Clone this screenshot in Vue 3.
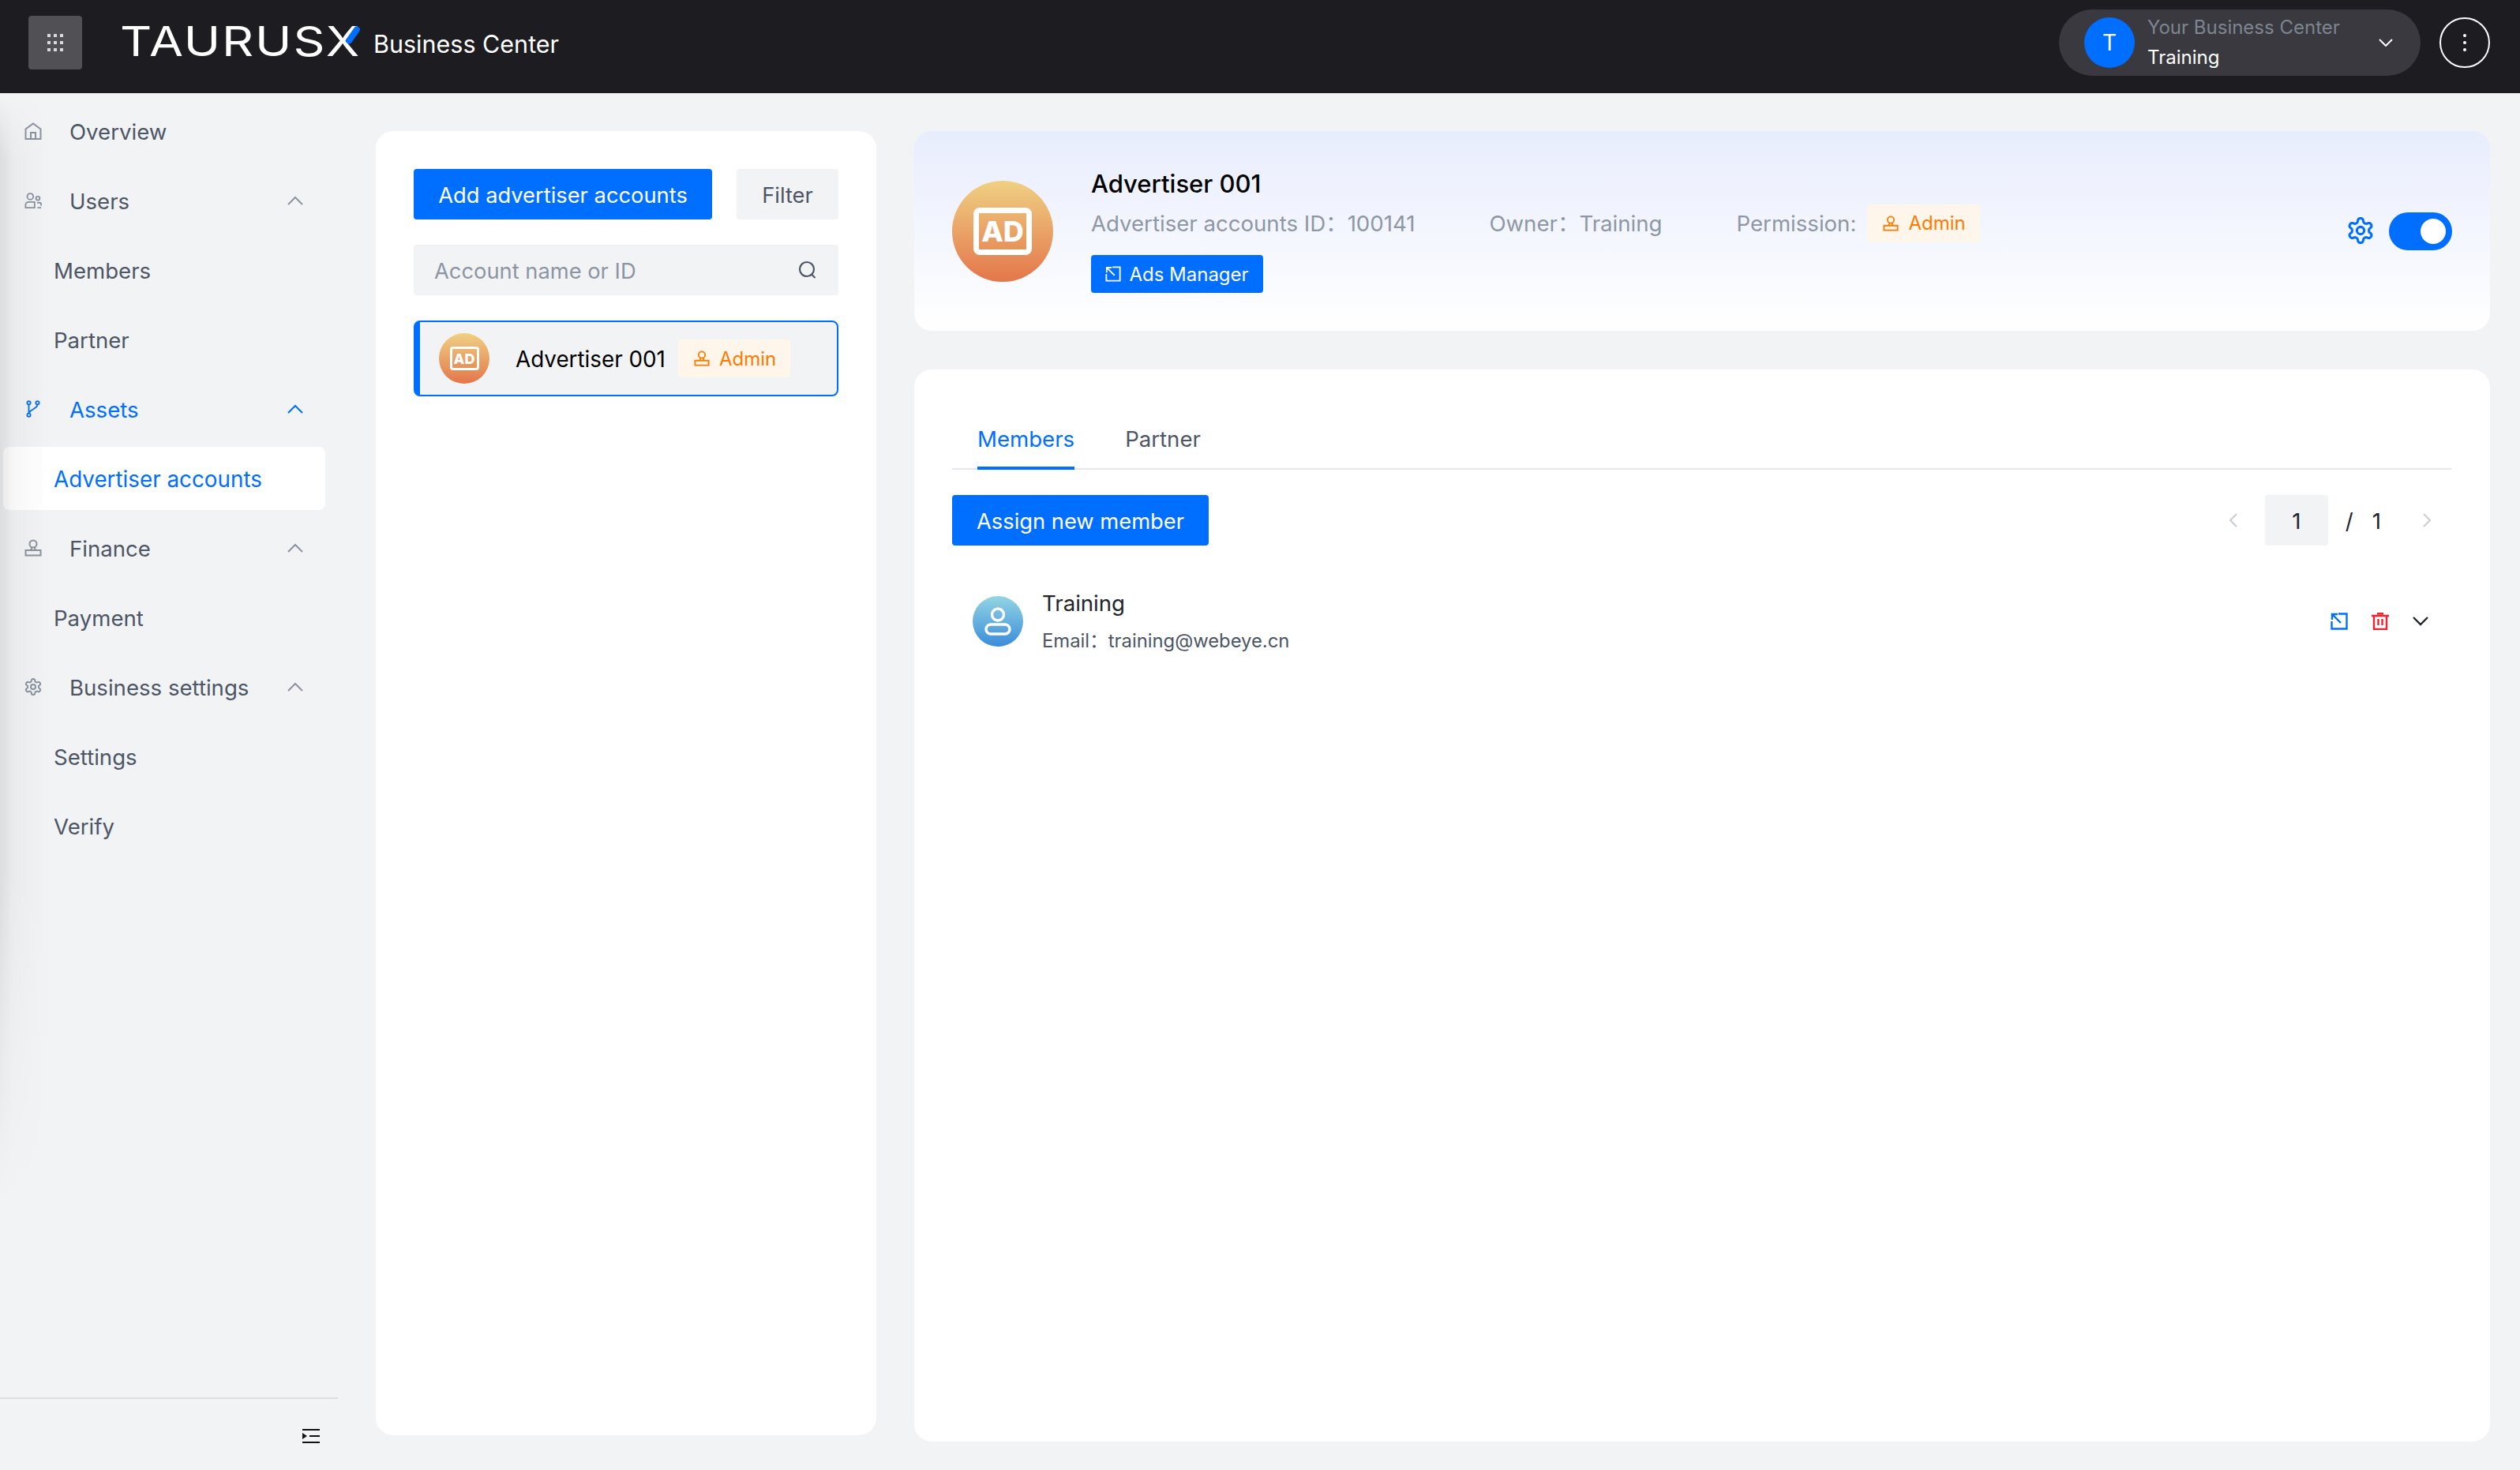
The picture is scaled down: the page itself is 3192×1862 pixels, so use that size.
<template>
  <div class="page">
    <!-- shared icon symbols -->
    <svg class="defs" aria-hidden="true">
      <symbol id="i-home" viewBox="0 0 22 22"><path d="M1.5 21V8.5L11 1.5l9.5 7V21zM8 21v-8h6v8" /></symbol>
      <symbol id="i-users" viewBox="0 0 24 22"><circle cx="8" cy="5.5" r="4.2" /><circle cx="18.5" cy="8" r="2.6" /><path d="M1.5 21v-4a4 4 0 0 1 4-4H14v8zM17.5 14h3a2.5 2.5 0 0 1 2.5 2.5V18M18 21h5" /></symbol>
      <symbol id="i-branch" viewBox="0 0 20 24"><circle cx="4" cy="3.5" r="2.3" /><circle cx="16" cy="3.5" r="2.3" /><circle cx="4" cy="20.5" r="2.3" /><path d="M4 6v12M16 6c0 5-8 6-12 11" /></symbol>
      <symbol id="i-stamp" viewBox="0 0 22 22"><circle cx="11" cy="6" r="4.5" /><path d="M9 10.2c0 1.6-.4 2.8-1 3.8M13 10.2c0 1.6.4 2.8 1 3.8M1.5 14h19v6.5h-19z" /></symbol>
      <symbol id="i-gear" viewBox="1 1 22 22"><path d="M12.22 2h-.44a2 2 0 0 0-2 2v.18a2 2 0 0 1-1 1.73l-.43.25a2 2 0 0 1-2 0l-.15-.08a2 2 0 0 0-2.73.73l-.22.38a2 2 0 0 0 .73 2.73l.15.1a2 2 0 0 1 1 1.72v.51a2 2 0 0 1-1 1.74l-.15.09a2 2 0 0 0-.73 2.73l.22.38a2 2 0 0 0 2.73.73l.15-.08a2 2 0 0 1 2 0l.43.25a2 2 0 0 1 1 1.73V20a2 2 0 0 0 2 2h.44a2 2 0 0 0 2-2v-.18a2 2 0 0 1 1-1.73l.43-.25a2 2 0 0 1 2 0l.15.08a2 2 0 0 0 2.73-.73l.22-.39a2 2 0 0 0-.73-2.73l-.15-.08a2 2 0 0 1-1-1.74v-.5a2 2 0 0 1 1-1.74l.15-.09a2 2 0 0 0 .73-2.73l-.22-.38a2 2 0 0 0-2.73-.73l-.15.08a2 2 0 0 1-2 0l-.43-.25a2 2 0 0 1-1-1.73V4a2 2 0 0 0-2-2z" /><circle cx="12" cy="12" r="3" /></symbol>
      <symbol id="i-open" viewBox="0 0 22 22"><path d="M10 1.5h10.5v19h-19V11M2.5 2.5l10.5 10.5M2 9V2h7" /></symbol>
    </svg>

    <header class="topbar">
      <button class="grid-btn">
        <svg width="20" height="22" viewBox="0 0 20 22"><g fill="#d9d9db"><rect v-for="d in gridDots" :key="d.k" :x="d.x" :y="d.y" width="4" height="4" /></g></svg>
      </button>
      <div class="logo"><span class="logo-word">TAURUSX</span><i class="logo-mark"></i></div>
      <span class="product">Business Center</span>
      <div class="spacer"></div>
      <div class="account">
        <span class="account-avatar">T</span>
        <div class="account-text">
          <div class="account-label">Your Business Center</div>
          <div class="account-name">Training</div>
        </div>
        <svg class="account-caret" width="18" height="10" viewBox="0 0 18 10"><path d="M1 1l8 8 8-8" /></svg>
      </div>
      <button class="more-btn"><i></i><i></i><i></i></button>
    </header>

    <div class="body">
      <aside class="sidebar">
        <nav class="nav">
          <div
            v-for="item in navItems"
            :key="item.label"
            class="nav-item"
            :class="{ sub: !item.icon, active: item.active, current: item.current }"
          >
            <svg v-if="item.icon" class="nav-icon"><use :href="'#i-' + item.icon" /></svg>
            <span class="nav-label">{{ item.label }}</span>
            <svg v-if="item.caret" class="nav-caret" width="20" height="12" viewBox="0 0 20 12"><path d="M1 11l9-9 9 9" /></svg>
          </div>
        </nav>
        <div class="side-foot">
          <svg width="22" height="18" viewBox="0 0 22 18"><path d="M0 1h22M9 9h13M0 17h22" stroke="#111" stroke-width="2" fill="none" /><path d="M0 5l6 4-6 4z" fill="#111" /></svg>
        </div>
      </aside>

      <section class="account-list card">
        <div class="list-actions">
          <button class="btn primary add-btn">Add advertiser accounts</button>
          <button class="btn ghost">Filter</button>
        </div>
        <div class="search">
          <span class="search-text">Account name or ID</span>
          <svg width="24" height="24" viewBox="0 0 24 24"><circle cx="11" cy="11" r="9" /><path d="M17.5 18l4 4" /></svg>
        </div>
        <div class="account-row">
          <div class="ad-avatar small"><span class="ad-box">AD</span></div>
          <span class="row-name">Advertiser 001</span>
          <span class="tag"><svg class="tag-icon"><use href="#i-stamp" /></svg>Admin</span>
        </div>
      </section>

      <main class="detail">
        <section class="summary card">
          <div class="ad-avatar big"><span class="ad-box">AD</span></div>
          <div class="summary-info">
            <h1 class="summary-title">Advertiser 001</h1>
            <div class="summary-meta">
              <span>Advertiser accounts ID：100141</span>
              <span>Owner：Training</span>
              <span class="perm">Permission:<span class="tag"><svg class="tag-icon"><use href="#i-stamp" /></svg>Admin</span></span>
            </div>
            <button class="ads-btn"><svg class="ads-icon"><use href="#i-open" /></svg>Ads Manager</button>
          </div>
          <div class="summary-tools">
            <svg class="tool-gear"><use href="#i-gear" /></svg>
            <span class="switch"><i></i></span>
          </div>
        </section>

        <section class="members card">
          <div class="tabs">
            <span class="tab active">Members</span>
            <span class="tab">Partner</span>
          </div>
          <div class="toolbar">
            <button class="btn primary assign-btn">Assign new member</button>
            <div class="pager">
              <svg class="pager-arrow" width="10" height="18" viewBox="0 0 10 18"><path d="M9 1L1 9l8 8" /></svg>
              <span class="pager-input">1</span>
              <span class="pager-slash">/</span>
              <span class="pager-total">1</span>
              <svg class="pager-arrow" width="10" height="18" viewBox="0 0 10 18"><path d="M1 1l8 8-8 8" /></svg>
            </div>
          </div>
          <div class="member">
            <div class="member-avatar">
              <svg width="34" height="36" viewBox="0 0 34 36"><circle cx="17" cy="9.5" r="7.5" /><rect x="2" y="22" width="30" height="12" rx="6" /></svg>
            </div>
            <div class="member-text">
              <div class="member-name">Training</div>
              <div class="member-mail">Email：training@webeye.cn</div>
            </div>
            <div class="member-actions">
              <svg class="act-open"><use href="#i-open" /></svg>
              <svg class="act-trash" width="22" height="22" viewBox="0 0 22 22"><path d="M0 4h22M7 1.2h8M3 4v17h16V4M8.5 8v8M13.5 8v8" /></svg>
              <svg class="act-caret" width="20" height="12" viewBox="0 0 20 12"><path d="M1 1l9 9 9-9" /></svg>
            </div>
          </div>
        </section>
      </main>
    </div>
  </div>
</template>

<script setup>
const gridDots = []
for (let r = 0; r < 3; r++) {
  for (let c = 0; c < 3; c++) {
    gridDots.push({ k: `${r}-${c}`, x: c * 8, y: r * 9 })
  }
}

const navItems = [
  { label: 'Overview', icon: 'home' },
  { label: 'Users', icon: 'users', caret: true },
  { label: 'Members' },
  { label: 'Partner' },
  { label: 'Assets', icon: 'branch', caret: true, active: true },
  { label: 'Advertiser accounts', active: true, current: true },
  { label: 'Finance', icon: 'stamp', caret: true },
  { label: 'Payment' },
  { label: 'Business settings', icon: 'gear', caret: true },
  { label: 'Settings' },
  { label: 'Verify' }
]
</script>

<style>
html, body { margin: 0; background: #f2f3f5; }
</style>

<style scoped>
.page {
  min-height: 100vh;
  display: flex;
  flex-direction: column;
  background: #f2f3f5;
  font-family: Inter, "Noto Sans CJK SC", sans-serif;
  font-size: 27.6px;
  color: #4c5666;
}
.defs { position: absolute; width: 0; height: 0; }
button { font-family: inherit; border: 0; padding: 0; white-space: nowrap; }

/* top bar */
.topbar {
  height: 118px;
  flex-shrink: 0;
  display: flex;
  align-items: center;
  padding: 0 38px 10px 36px;
  background: #1c1c21;
  box-sizing: border-box;
}
.grid-btn {
  width: 68px;
  height: 68px;
  display: flex;
  align-items: center;
  justify-content: center;
  background: #505055;
  border-radius: 4px;
}
.logo {
  position: relative;
  margin: -2px 0 0 48px;
  width: 302px;
  height: 52px;
  color: #fff;
}
.logo-word {
  display: block;
  white-space: nowrap;
  font-size: 52px;
  line-height: 52px;
  font-weight: 400;
  letter-spacing: 1.6px;
  transform: scaleX(1.2);
  transform-origin: left center;
}
.logo-mark {
  position: absolute;
  right: 3px;
  top: 5px;
  width: 8px;
  height: 25px;
  background: #006eff;
  border-radius: 4px;
  transform: rotate(35deg);
}
.product {
  margin: 2px 0 0 19px;
  color: #fff;
  font-size: 30.5px;
}
.spacer { flex: 1; }
.account {
  width: 458px;
  height: 84px;
  box-sizing: border-box;
  display: flex;
  align-items: center;
  padding: 0 35px 0 32px;
  background: #39393f;
  border-radius: 42px;
}
.account-avatar {
  width: 64px;
  height: 64px;
  border-radius: 50%;
  background: #006eff;
  color: #fff;
  font-size: 28px;
  display: flex;
  align-items: center;
  justify-content: center;
}
.account-text { flex: 1; margin-left: 16px; }
.account-label { font-size: 24px; line-height: 38px; color: #7e8590; }
.account-name { font-size: 24px; line-height: 38px; color: #fff; }
.account-caret { fill: none; stroke: #fff; stroke-width: 2; }
.more-btn {
  width: 64px;
  height: 64px;
  margin-left: 24px;
  box-sizing: border-box;
  display: flex;
  flex-direction: column;
  align-items: center;
  justify-content: center;
  gap: 5px;
  background: transparent;
  border: 2px solid #fff;
  border-radius: 50%;
}
.more-btn i { width: 4px; height: 4px; background: #fff; border-radius: 50%; }

/* layout */
.body { flex: 1; display: flex; padding-bottom: 36px; }
.card { background: #fff; border-radius: 22px; box-sizing: border-box; }

/* sidebar */
.sidebar {
  position: relative;
  width: 428px;
  flex-shrink: 0;
  display: flex;
  flex-direction: column;
  margin-bottom: -36px;
}
.sidebar::after {
  content: "";
  position: absolute;
  left: 0;
  top: 0;
  bottom: 340px;
  width: 62px;
  pointer-events: none;
  background: linear-gradient(to right, rgba(0, 0, 0, 0.09), rgba(0, 0, 0, 0.03) 28%, rgba(0, 0, 0, 0) 100%);
  -webkit-mask-image: linear-gradient(to bottom, transparent, #000 6%, #000 70%, transparent);
  mask-image: linear-gradient(to bottom, transparent, #000 6%, #000 70%, transparent);
}
.nav {
  flex: 1;
  display: flex;
  flex-direction: column;
  gap: 8px;
  padding: 8px 16px 0 4px;
}
.nav-item {
  height: 80px;
  flex-shrink: 0;
  display: flex;
  align-items: center;
  padding: 0 28px 0 27px;
  border-radius: 8px;
}
.nav-item.sub { padding-left: 64px; }
.nav-item.active { color: #006eff; }
.nav-item.current { background: #fff; }
.nav-icon {
  width: 22px;
  height: 22px;
  margin-right: 35px;
  fill: none;
  stroke: #8a93a0;
  stroke-width: 2;
}
.active .nav-icon { stroke: #006eff; }
.nav-label { flex: 1; padding-top: 2px; }
.current .nav-label { font-size: 27.8px; }
.nav-caret { fill: none; stroke: #8a93a0; stroke-width: 2; }
.active .nav-caret { stroke: #006eff; }
.side-foot {
  height: 92px;
  box-sizing: border-box;
  border-top: 2px solid #dcdee1;
  display: flex;
  align-items: center;
  justify-content: flex-end;
  padding: 4px 23px 0 0;
}

/* account list */
.account-list {
  width: 634px;
  height: 1652px;
  flex-shrink: 0;
  margin: 48px 48px 0;
  padding: 48px;
}
.list-actions { display: flex; justify-content: space-between; }
.btn { height: 64px; border-radius: 4px; font-size: 27.3px; padding-top: 2px; }
.btn.primary { background: #006eff; color: #fff; }
.btn.ghost { background: #f2f3f5; color: #4c5666; width: 129px; }
.add-btn { width: 378px; }
.search {
  margin-top: 32px;
  height: 64px;
  display: flex;
  align-items: center;
  justify-content: space-between;
  padding: 0 27px 0 26px;
  background: #f2f3f5;
  border-radius: 4px;
  color: #8c95a3;
  font-size: 27.3px;
}
.search-text { padding-top: 2px; }
.search svg { fill: none; stroke: #4c5666; stroke-width: 2.2; }
.account-row {
  margin-top: 32px;
  height: 96px;
  box-sizing: border-box;
  display: flex;
  align-items: center;
  padding-left: 24px;
  background: #f2f3f5;
  border: 2px solid #006eff;
  border-left-width: 8px;
  border-radius: 8px;
}
.row-name { margin-left: 33px; color: #000; padding-top: 2px; font-size: 27.8px; }
.account-row .tag { margin-left: 16px; }
.tag {
  height: 48px;
  padding: 0 18px 0 20px;
  display: inline-flex;
  align-items: center;
  gap: 12px;
  font-size: 24px;
  color: #ff7a00;
  background: #fef6ea;
  border-radius: 4px;
}
.tag-icon { width: 20px; height: 20px; fill: none; stroke: #ff7a00; stroke-width: 2; }

/* AD avatar */
.ad-avatar {
  flex-shrink: 0;
  border-radius: 50%;
  background: linear-gradient(#efd083, #e4764a);
  display: flex;
  align-items: center;
  justify-content: center;
}
.ad-box {
  box-sizing: border-box;
  display: flex;
  align-items: center;
  justify-content: center;
  color: #fff;
  font-weight: 800;
  border-style: solid;
  border-color: #fff;
}
.ad-avatar.big { width: 128px; height: 128px; }
.big .ad-box { width: 74px; height: 60px; border-width: 7px; border-radius: 8px; font-size: 36px; }
.ad-avatar.small { width: 64px; height: 64px; }
.small .ad-box { width: 37px; height: 30px; border-width: 3.5px; border-radius: 4px; font-size: 18px; }

/* detail */
.detail { flex: 1; min-width: 0; display: flex; flex-direction: column; margin: 48px 38px 0 0; gap: 49px; }
.summary {
  height: 253px;
  flex-shrink: 0;
  display: flex;
  align-items: center;
  padding: 0 48px;
  background: linear-gradient(#e8edfd, #fff);
}
.summary-info { flex: 1; align-self: flex-start; margin-left: 48px; padding-top: 43px; }
.summary-title { margin: 0; font-size: 31px; line-height: 48px; font-weight: 500; color: #000; }
.summary-meta {
  margin-top: 2px;
  height: 48px;
  display: flex;
  align-items: center;
  gap: 94px;
  color: #8e97a5;
  line-height: 36px;
}
.perm { display: flex; align-items: center; gap: 14px; }
.ads-btn {
  margin-top: 16px;
  width: 218px;
  height: 48px;
  display: flex;
  align-items: center;
  justify-content: center;
  gap: 10px;
  background: #006eff;
  color: #fff;
  font-size: 24px;
  border-radius: 4px;
}
.ads-icon { width: 20px; height: 20px; fill: none; stroke: #fff; stroke-width: 2; }
.summary-tools { display: flex; align-items: center; gap: 19px; }
.tool-gear { width: 34px; height: 34px; margin-top: -2px; fill: none; stroke: #006eff; stroke-width: 2; }
.switch {
  width: 80px;
  height: 48px;
  box-sizing: border-box;
  padding: 8px;
  display: flex;
  justify-content: flex-end;
  background: #006eff;
  border-radius: 24px;
}
.switch i { width: 32px; height: 32px; background: #fff; border-radius: 50%; }

/* members */
.members { flex: 1; padding: 48px 49px 0 48px; }
.tabs { height: 79px; box-sizing: border-box; display: flex; gap: 64px; padding-left: 32px; border-bottom: 2px solid #e5e6eb; }
.tab { height: 79px; box-sizing: border-box; line-height: 80px; }
.tab.active { color: #006eff; border-bottom: 4px solid #006eff; }
.toolbar { margin-top: 32px; display: flex; justify-content: space-between; align-items: center; }
.assign-btn { width: 325px; }
.pager { display: flex; align-items: center; padding-right: 26px; color: #20242c; }
.pager-arrow { fill: none; stroke: #c9cdd4; stroke-width: 2; }
.pager-input {
  width: 80px;
  height: 64px;
  margin: 0 22px 0 35px;
  padding-top: 2px;
  box-sizing: border-box;
  display: flex;
  align-items: center;
  justify-content: center;
  background: #f2f3f5;
  border-radius: 4px;
}
.pager-slash { margin-right: 24px; padding-top: 2px; }
.pager-total { margin-right: 53px; padding-top: 2px; }
.member { margin-top: 52px; display: flex; align-items: center; padding: 0 29px 0 26px; }
.member-avatar {
  width: 64px;
  height: 64px;
  border-radius: 50%;
  background: linear-gradient(#93d5e3, #3a8cdb);
  display: flex;
  align-items: center;
  justify-content: center;
}
.member-avatar svg { fill: none; stroke: #fff; stroke-width: 3.4; }
.member-text { flex: 1; margin-left: 24px; }
.member-name { line-height: 42px; color: #20242c; }
.member-mail { margin-top: 9px; font-size: 23.8px; line-height: 36px; color: #4c5666; }
.member-actions { display: flex; align-items: center; gap: 30px; }
.act-open { width: 22px; height: 22px; fill: none; stroke: #006eff; stroke-width: 2.4; }
.act-trash { fill: none; stroke: #f5222d; stroke-width: 2.4; }
.act-caret { fill: none; stroke: #20242c; stroke-width: 2.4; }
</style>
